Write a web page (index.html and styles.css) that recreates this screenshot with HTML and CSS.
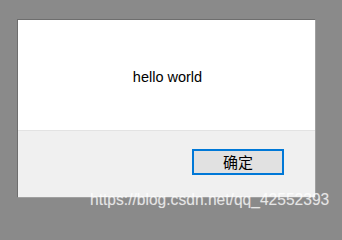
FILE: index.html
```html
<!DOCTYPE html>
<html>
<head>
<meta charset="utf-8">
<link rel="stylesheet" href="styles.css">
</head>
<body>
<div class="dialog">
  <div class="content">
    <p class="message">hello world</p>
  </div>
  <div class="footer">
    <button class="ok">确定</button>
  </div>
</div>
<div class="watermark">https://blog.csdn.net/qq_42552393</div>
</body>
</html>
```
FILE: styles.css
```css
html, body {
  margin: 0;
  padding: 0;
  background: #8a8a8a;
  width: 342px;
  height: 219px;
  overflow: hidden;
  position: relative;
}
.dialog {
  box-sizing: border-box;
  margin: 19px 0 0 17px;
  width: 299px;
  height: 179px;
  border: 1px solid #6e6e6e;
  border-right-color: #a0a0a0;
  border-bottom-color: #a0a0a0;
  display: flex;
  flex-direction: column;
  background: #f0f0f0;
}
.content {
  box-sizing: border-box;
  height: 111px;
  background: #ffffff;
  border-bottom: 1px solid #e3e3e3;
  display: flex;
  justify-content: center;
}
.message {
  margin: 0;
  padding-top: 47px;
  padding-left: 2px;
  font-family: "Liberation Sans", Arial, sans-serif;
  font-size: 14.5px;
  line-height: 20px;
  color: #000;
}
.footer {
  flex: 1;
  display: flex;
  justify-content: flex-end;
  align-items: flex-start;
  padding: 18px 31px 0 0;
}
.ok {
  box-sizing: border-box;
  width: 92px;
  height: 26px;
  margin: 0;
  padding: 0;
  border: 2px solid #0078d7;
  background: #e1e1e1;
  font-family: "Noto Sans CJK SC", sans-serif;
  font-size: 15px;
  line-height: 20px;
  color: #000;
}
.watermark {
  position: absolute;
  left: 90px;
  top: 191px;
  font-family: "Liberation Sans", Arial, sans-serif;
  font-size: 15.6px;
  line-height: 18px;
  color: rgba(255, 255, 255, 0.72);
  text-shadow: 0 0 1px rgba(255, 255, 255, 0.3);
  white-space: nowrap;
}
```
